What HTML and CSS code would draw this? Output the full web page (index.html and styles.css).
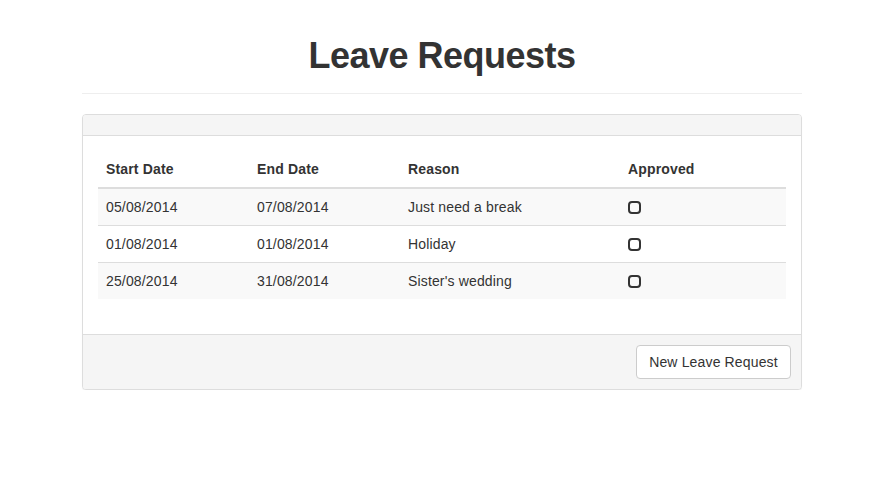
FILE: index.html
```html
<!DOCTYPE html>
<html>
<head>
<meta charset="utf-8">
<link rel="stylesheet" href="styles.css">
</head>
<body>
<div class="container">
  <div class="page-header">
    <h1>Leave Requests</h1>
  </div>
  <div class="panel">
    <div class="panel-heading"></div>
    <div class="panel-body">
      <table class="table">
        <thead>
          <tr>
            <th class="c1">Start Date</th>
            <th class="c2">End Date</th>
            <th class="c3">Reason</th>
            <th class="c4">Approved</th>
          </tr>
        </thead>
        <tbody>
          <tr class="odd">
            <td>05/08/2014</td>
            <td>07/08/2014</td>
            <td>Just need a break</td>
            <td><svg class="chk" width="13" height="13" viewBox="0 0 13 13"><rect x="1" y="1" width="11" height="11" rx="3" ry="3" fill="none" stroke="#333" stroke-width="2"/></svg></td>
          </tr>
          <tr>
            <td>01/08/2014</td>
            <td>01/08/2014</td>
            <td>Holiday</td>
            <td><svg class="chk" width="13" height="13" viewBox="0 0 13 13"><rect x="1" y="1" width="11" height="11" rx="3" ry="3" fill="none" stroke="#333" stroke-width="2"/></svg></td>
          </tr>
          <tr class="odd">
            <td>25/08/2014</td>
            <td>31/08/2014</td>
            <td>Sister's wedding</td>
            <td><svg class="chk" width="13" height="13" viewBox="0 0 13 13"><rect x="1" y="1" width="11" height="11" rx="3" ry="3" fill="none" stroke="#333" stroke-width="2"/></svg></td>
          </tr>
        </tbody>
      </table>
    </div>
    <div class="panel-footer">
      <button class="btn">New Leave Request</button>
    </div>
  </div>
</div>
</body>
</html>
```

FILE: styles.css
```css
* { box-sizing: border-box; }
html, body { margin: 0; padding: 0; background: #fff; }
body {
  font-family: "Liberation Sans", Arial, sans-serif;
  font-size: 14px;
  line-height: 20px;
  color: #333;
  letter-spacing: 0.15px;
}
.container {
  width: 720px;
  margin: 0 0 0 82px;
}
.page-header {
  padding-top: 36px;
  padding-bottom: 9px;
  border-bottom: 1px solid #eee;
  margin-bottom: 20px;
}
.page-header h1 {
  margin: 0 0 8px 0;
  font-size: 36px;
  line-height: 40px;
  font-weight: bold;
  letter-spacing: -0.5px;
  text-align: center;
  color: #333;
}
.panel {
  border: 1px solid #ddd;
  border-radius: 4px;
  background: #fff;
  box-shadow: 0 1px 1px rgba(0,0,0,0.05);
}
.panel-heading {
  height: 21px;
  background: #f5f5f5;
  border-bottom: 1px solid #ddd;
  border-radius: 3px 3px 0 0;
}
.panel-body {
  padding: 15px;
}
.table {
  width: 100%;
  border-collapse: collapse;
  border-spacing: 0;
  margin-bottom: 20px;
}
.table th {
  text-align: left;
  font-weight: bold;
  padding: 8px;
  line-height: 20px;
  border-bottom: 2px solid #ddd;
  vertical-align: bottom;
}
.table td {
  padding: 8px;
  line-height: 20px;
  border-top: 1px solid #ddd;
  vertical-align: top;
}
.table tbody tr:first-child td { border-top: 0; }
.table tr.odd td { background: #f9f9f9; }
.c1 { width: 151px; }
.c2 { width: 151px; }
.c3 { width: 220px; }
.c4 { width: 166px; }
.chk { display: block; margin-top: 4px; }
.panel-footer {
  background: #f5f5f5;
  border-top: 1px solid #ddd;
  padding: 10px 10px 10px 15px;
  display: flex;
  justify-content: flex-end;
  border-radius: 0 0 3px 3px;
}
.btn {
  font-family: "Liberation Sans", Arial, sans-serif;
  font-size: 14px;
  line-height: 20px;
  letter-spacing: 0.15px;
  color: #333;
  background: #fff;
  border: 1px solid #ccc;
  border-radius: 4px;
  padding: 6px 12px;
  height: 34px;
  width: 155px;
}
```
